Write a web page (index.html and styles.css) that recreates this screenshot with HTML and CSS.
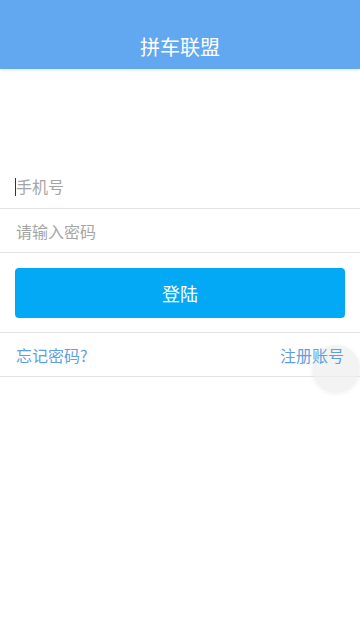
FILE: index.html
```html
<!DOCTYPE html>
<html lang="zh-CN">
<head>
<meta charset="utf-8">
<meta name="viewport" content="width=device-width, initial-scale=1">
<title>拼车联盟</title>
<link rel="stylesheet" href="styles.css">
</head>
<body>
<div class="app">
  <header class="header">
    <h1 class="title">拼车联盟</h1>
  </header>
  <main class="login">
    <div class="field field-phone">
      <span class="caret"></span>
      <input class="input" type="text" placeholder="手机号">
    </div>
    <div class="field">
      <input class="input" type="password" placeholder="请输入密码">
    </div>
    <div class="btn-wrap">
      <button class="btn" type="button">登陆</button>
    </div>
    <div class="links">
      <a class="link" href="#">忘记密码?</a>
      <a class="link" href="#">注册账号</a>
      <span class="fab"></span>
    </div>
  </main>
</div>
</body>
</html>
```
FILE: styles.css
```css
* { box-sizing: border-box; }
html, body {
  margin: 0;
  padding: 0;
  background: #ffffff;
  font-family: "Noto Sans CJK SC", "Noto Sans", "Liberation Sans", sans-serif;
}
.app {
  width: 360px;
  min-height: 640px;
  background: #ffffff;
  overflow: hidden;
}
.header {
  height: 69px;
  padding-top: 24px;
  background: #62a8f1;
  box-shadow: 0 1px 3px rgba(0, 0, 0, 0.12);
}
.title {
  margin: 0;
  height: 45px;
  line-height: 45px;
  text-align: center;
  color: #ffffff;
  font-size: 20px;
  font-weight: 400;
}
.login {
  padding-top: 95px;
}
.field {
  height: 44px;
  border-bottom: 1px solid #e3e3e3;
  display: flex;
  align-items: center;
  padding-left: 15px;
  position: relative;
}
.field-phone {
  height: 45px;
}
.caret {
  position: absolute;
  left: 15px;
  top: 14px;
  width: 1px;
  height: 18px;
  background: #333333;
}
.input {
  border: none;
  outline: none;
  padding: 0 0 0 1px;
  margin: 0;
  width: 100%;
  height: 100%;
  font-family: inherit;
  font-size: 16px;
  color: #333333;
  background: transparent;
}
.input::placeholder {
  color: #a5a5a5;
}
.btn-wrap {
  padding: 15px 15px 14px;
  border-bottom: 1px solid #e3e3e3;
}
.btn {
  display: block;
  width: 100%;
  height: 50px;
  border: none;
  border-radius: 4px;
  background: #03a9f4;
  color: #ffffff;
  font-family: inherit;
  font-size: 18px;
  cursor: pointer;
}
.links {
  position: relative;
  height: 44px;
  border-bottom: 1px solid #e3e3e3;
  display: flex;
  align-items: center;
  justify-content: space-between;
  padding: 0 16px;
}
.link {
  color: #5c9fe2;
  font-size: 16px;
  text-decoration: none;
  position: relative;
  z-index: 1;
}
.fab {
  position: absolute;
  right: 0;
  top: 12px;
  width: 48px;
  height: 48px;
  border-radius: 50%;
  background: rgba(238, 238, 238, 0.7);
  box-shadow: 0 1px 4px rgba(0, 0, 0, 0.06);
}
```
